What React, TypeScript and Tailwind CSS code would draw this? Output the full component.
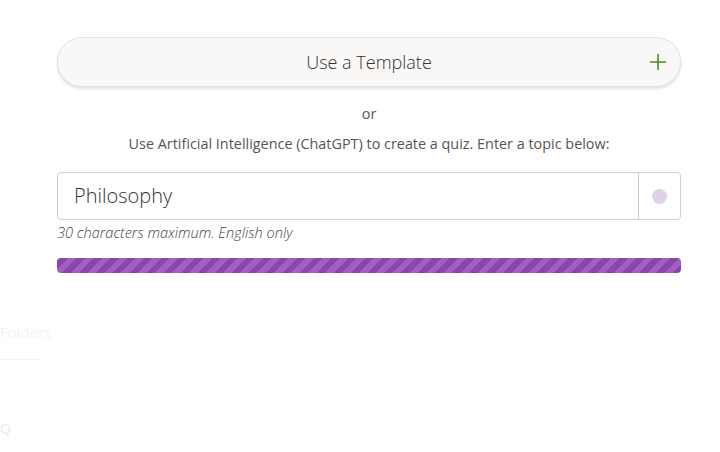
import React from "react";

const App: React.FC = () => {
  return (
    <div className="relative w-[720px] h-[452px] bg-white overflow-hidden font-['Open_Sans',sans-serif] text-[#444]">
      <div className="w-[624px] ml-[57px] pt-[37px] flex flex-col">
        <button className="relative h-[50px] w-full rounded-full bg-[#f9f8f6] border border-[#e2e2e2] shadow-[0_2px_3px_rgba(0,0,0,0.12)] flex items-center justify-center">
          <span className="text-[18px] font-light text-[#333]">Use a Template</span>
          <svg
            className="absolute right-[12px] top-1/2 -translate-y-1/2"
            width="20"
            height="20"
            viewBox="0 0 20 20"
          >
            <path d="M10 2v16M2 10h16" stroke="#4a8a2a" strokeWidth="1.6" />
          </svg>
        </button>
        <p className="mt-[17px] text-center text-[14.4px] leading-[20px] text-[#555]">or</p>
        <p className="mt-[10px] text-center text-[14.4px] leading-[20px] text-[#555]">
          Use Artificial Intelligence (ChatGPT) to create a quiz. Enter a topic below:
        </p>
        <div className="mt-[18px] h-[48px] flex border border-[#d0d0d0] rounded-[4px] bg-white">
          <div className="flex-1 flex items-center pl-[16px] text-[20px] font-light text-[#333]">
            Philosophy
          </div>
          <div className="w-[42px] border-l border-[#d0d0d0] flex items-center justify-center">
            <span className="w-[15px] h-[15px] rounded-full bg-[#e1d0ea]" />
          </div>
        </div>
        <p className="mt-[2px] text-[14.6px] leading-[20px] italic font-light text-[#444]">
          30 characters maximum. English only
        </p>
        <div className="mt-[16px] h-[15px] rounded-[4px] bg-[repeating-linear-gradient(-45deg,#8e44ad_0px,#8e44ad_6px,#a25fc2_6px,#a25fc2_12px)]" />
      </div>
      <div className="mt-[50px] w-[50px] flex flex-col">
        <span className="text-[15px] leading-[18px] text-[#f2f2f2]">Folders</span>
        <div className="mt-[18px] h-px w-[40px] bg-[#f3f3f3]" />
        <span className="mt-[60px] text-[14px] leading-[18px] text-[#e6efe0]">Q</span>
      </div>
    </div>
  );
};

export default App;
